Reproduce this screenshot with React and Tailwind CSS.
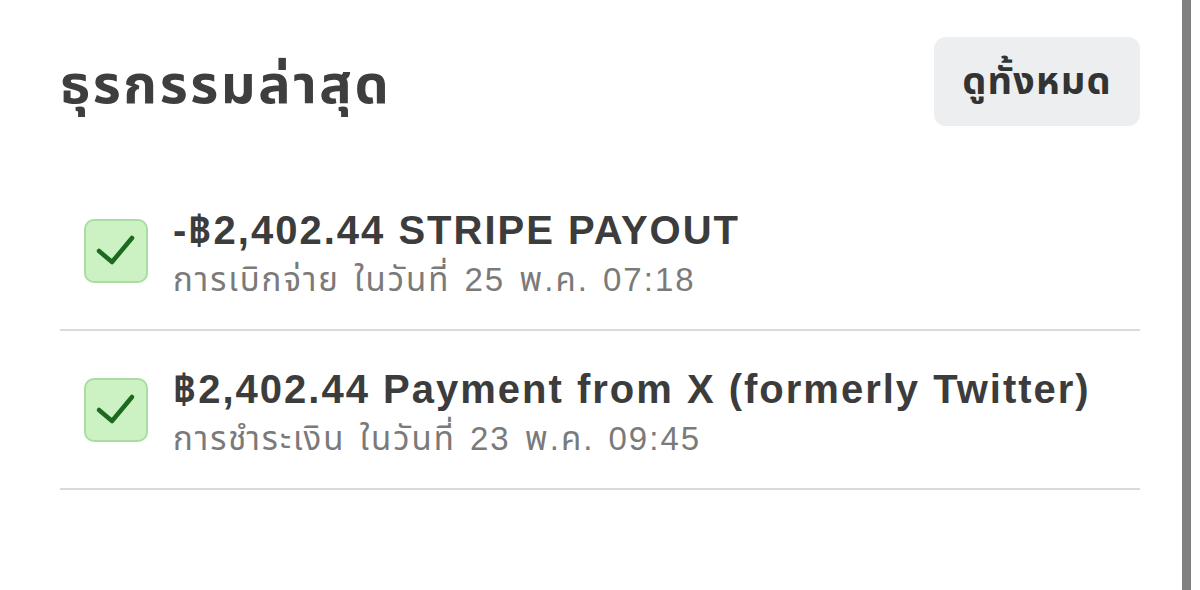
import React from "react";

const font = { fontFamily: '"Liberation Sans", "Noto Sans", "Noto Sans Thai", sans-serif' };

function Check() {
  return (
    <div className="w-[64px] h-[64px] shrink-0 rounded-[10px] bg-[#ccf2c4] border-2 border-[#aadda1] flex items-center justify-center">
      <svg width="60" height="60" viewBox="2 2 60 60" fill="none" stroke="#1b6a1d" strokeWidth="4.5" strokeLinecap="round" strokeLinejoin="round">
        <path d="M15 32L28 43L48 19" />
      </svg>
    </div>
  );
}

function Row({ title, sub }) {
  return (
    <div className="border-b-2 border-[#dadada]">
      <div className="flex items-center gap-[25px] pl-[24px] h-[157px]">
        <Check />
        <div className="flex flex-col pt-[10px]">
          <div className="text-[40px] leading-[48px] font-bold text-[#3c3c3c] tracking-[2px]">{title}</div>
          <div className="text-[33px] leading-[52px] text-[#7a7a7a] tracking-[2px] [word-spacing:3px]">{sub}</div>
        </div>
      </div>
    </div>
  );
}

export default function App() {
  return (
    <div className="w-[1200px] h-[590px] bg-white flex overflow-hidden" style={font}>
      <div className="flex-1 pl-[60px] pr-[42px]">
        <div className="flex justify-between pt-[37px] h-[172px] items-start">
          <h1 className="text-[54px] font-bold text-[#3e3e3e] mt-[14px] leading-[66px] tracking-[2.6px]">ธุรกรรมล่าสุด</h1>
          <button className="w-[206px] h-[89px] rounded-[12px] bg-[#eceef0] text-[38px] font-bold text-[#333] tracking-[1.2px] flex items-center justify-center">
            ดูทั้งหมด
          </button>
        </div>
        <Row title="-฿2,402.44 STRIPE PAYOUT" sub="การเบิกจ่าย ในวันที่ 25 พ.ค. 07:18" />
        <Row title="฿2,402.44 Payment from X (formerly Twitter)" sub="การชำระเงิน ในวันที่ 23 พ.ค. 09:45" />
      </div>
      <div className="w-[9px] h-full bg-[#808080]" />
      <div className="w-[9px] h-full bg-white" />
    </div>
  );
}
